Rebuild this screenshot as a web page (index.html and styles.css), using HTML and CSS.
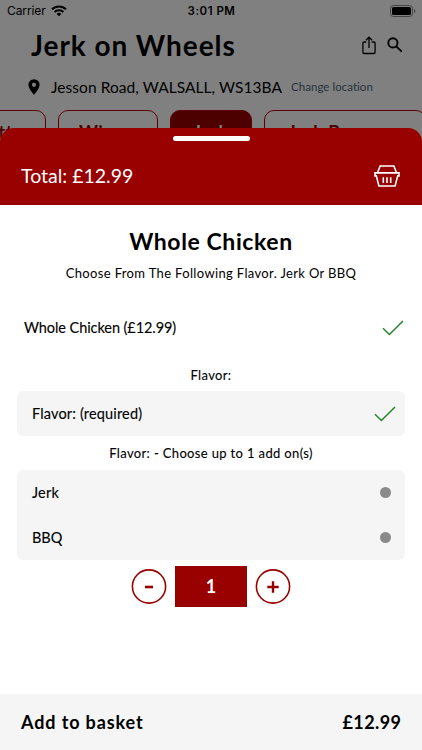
FILE: index.html
```
<!DOCTYPE html>
<html lang="en">
<head>
<meta charset="utf-8">
<title>Jerk on Wheels</title>
<link rel="stylesheet" href="styles.css">
</head>
<body>
<div class="screen">
  <div class="backdrop">
    <div class="status">
      <div class="carrier"><span class="carrier-name">Carrier</span>
        <svg width="16" height="12" viewBox="0 0 16 12" fill="none" stroke="#000" stroke-width="2.1"><path d="M1 4.3a10 10 0 0 1 14 0M3.6 7a6.3 6.3 0 0 1 8.8 0"/><path d="M8 11.3 5.6 8.9a3.5 3.5 0 0 1 4.8 0z" fill="#000" stroke="none"/></svg>
      </div>
      <span class="time">3:01 PM</span>
      <svg class="battery" width="26" height="12" viewBox="0 0 26 12"><rect x=".5" y=".5" width="22" height="11" rx="3" fill="none" stroke="#444"/><rect x="2" y="2" width="19" height="8" rx="1.6"/><path d="M24 4v4c1-.4 1.300-1 1.300-2s-.3-1.600-1.300-2z" fill="#444"/></svg>
    </div>
    <div class="title-row">
      <h1 class="shop">Jerk on Wheels</h1>
      <svg class="share" width="14" height="19" viewBox="0 0 14 19" fill="none" stroke="#000" stroke-width="1.300"><path d="M4.300 6H2.200Q.9 6 .9 7.300v8.900q0 1.300 1.300 1.300h9.600q1.300 0 1.300-1.300V7.300Q13.100 6 11.800 6H9.700M7 12V1.300M3.900 4.300 7 1.200l3.100 3.100"/></svg>
      <svg class="search" width="16" height="16" viewBox="0 0 16 16" fill="none" stroke="#000" stroke-width="1.900"><circle cx="5.900" cy="5.900" r="4.600"/><path d="m9.300 9.300 5.400 5.400"/></svg>
    </div>
    <div class="location">
      <svg width="12" height="16" viewBox="0 0 12 16"><path fill-rule="evenodd" d="M6 .2A5.600 5.600 0 0 0 .4 5.800C.4 9.800 6 15.700 6 15.700s5.600-5.900 5.600-9.900A5.600 5.600 0 0 0 6 .2zm0 3.500a2.100 2.100 0 1 1 0 4.200 2.100 2.100 0 0 1 0-4.200z"/></svg>
      <span class="address">Jesson Road, WALSALL, WS13BA</span>
      <span class="change">Change location</span>
    </div>
    <div class="tabs">
      <span class="tab tab-a">Platt</span><span class="tab tab-b">Wings</span><span class="tab tab-c">Jerk</span><span class="tab tab-d">Jerk Boxes</span>
    </div>
  </div>
  <div class="sheet">
    <div class="sheet-head">
      <div class="handle"></div>
      <div class="total-row">
        <span class="total">Total: £12.99</span>
        <svg width="26" height="22" viewBox="0 0 26 22" fill="none" stroke="#fff" stroke-width="1.600"><path d="M3.700 7.200 6.100 1h13.800l2.400 6.200M1 7.900h24v3h-1.300L21.100 21H4.900L2.300 10.900H1zM9.300 12.300v5.800M13 12.300v5.800M16.700 12.300v5.800"/></svg>
      </div>
    </div>
    <div class="content">
      <h2 class="dish">Whole Chicken</h2>
      <p class="desc"><span>Choose From The Following Flavor. Jerk Or BBQ</span></p>
      <div class="row base"><span class="t-base">Whole Chicken (£12.99)</span>
        <svg width="22" height="16" viewBox="0 0 22 16" fill="none" stroke="#23862b" stroke-width="1.500"><path d="m1 8.300 6.400 6.200L21 1"/></svg></div>
      <p class="label label-flavor"><span>Flavor:</span></p>
      <div class="card"><div class="row"><span class="t-req">Flavor: (required)</span>
        <svg width="22" height="16" viewBox="0 0 22 16" fill="none" stroke="#23862b" stroke-width="1.500"><path d="m1 8.300 6.400 6.200L21 1"/></svg></div></div>
      <p class="label label-addon"><span>Flavor: - Choose up to 1 add on(s)</span></p>
      <div class="card">
        <div class="row"><span class="t-jerk">Jerk</span><i class="dot"></i></div>
        <div class="row"><span class="t-bbq">BBQ</span><i class="dot"></i></div>
      </div>
      <div class="stepper">
        <svg width="36" height="36" viewBox="0 0 36 36" fill="none" stroke="#900"><circle cx="18" cy="17.500" r="16.600" stroke-width="1.600"/><path d="M14 18h8" stroke-width="2.600"/></svg>
        <span class="qty">1</span>
        <svg width="36" height="36" viewBox="0 0 36 36" fill="none" stroke="#900"><circle cx="18" cy="17.500" r="16.600" stroke-width="1.600"/><path d="M12.300 18h11.400M18 12.300v11.400" stroke-width="2.400"/></svg>
      </div>
    </div>
    <div class="footer"><span class="add">Add to basket</span><span class="price">£12.99</span></div>
  </div>
</div>
</body>
</html>
```
FILE: styles.css
```
* { box-sizing: border-box; }
body { margin: 0; font-family: Lato, "Liberation Sans", sans-serif; color: #000; }
h1, h2, p { margin: 0; }
svg { flex: none; display: block; }
span { white-space: nowrap; }
.screen { width: 422px; height: 750px; overflow: hidden; display: flex; flex-direction: column; background: #fff; }
.backdrop { background: #808080; height: 142px; flex: none; overflow: hidden; }
.status { height: 21px; display: grid; grid-template-columns: 1fr auto 1fr; align-items: center; padding: 0 6px 0 7px; font-family: Inter, sans-serif; font-size: 12px; }
.carrier { display: flex; align-items: center; gap: 5px; }
.carrier-name { letter-spacing: -.1px; }
.time { font-weight: 600; font-size: 11.500px; letter-spacing: .5px; }
.battery { justify-self: end; }
.title-row { height: 48px; display: flex; align-items: center; padding: 0 19px 0 31px; }
.shop { font-size: 28px; line-height: 48px; font-weight: 700; letter-spacing: .95px; flex: 1; white-space: nowrap; }
.share { margin-right: 11px; }
.location { height: 35px; display: flex; align-items: center; padding-left: 28px; }
.address { font-size: 15.500px; margin-left: 11px; letter-spacing: .06px; }
.change { font-size: 11.500px; margin-left: 9px; letter-spacing: .03px; color: #28323e; }
.tabs { display: flex; gap: 12px; margin: 6px 0 0 -54px; width: 500px; }
.tab { flex: none; height: 42px; border: 1px solid #5c0008; border-radius: 10px; color: #4c0000; font-weight: 700; font-size: 18px; letter-spacing: .5px; line-height: 42px; text-align: center; }
.tab-a { width: 100px; text-align: right; padding-right: 32px; }
.tab-b { width: 100px; text-align: left; padding-left: 20px; }
.tab-c { width: 82px; background: #4c0000; color: #808080; }
.tab-d { width: 162px; text-align: left; padding-left: 23px; }
.sheet { margin-top: -14px; position: relative; flex: 1; display: flex; flex-direction: column; }
.sheet-head { height: 77px; background: #900; border-radius: 14px 14px 0 0; padding-top: 8px; }
.sheet-head + .content { background: #fff; }
.handle { width: 77px; height: 5px; border-radius: 3px; background: #fff; margin: 0 auto; }
.total-row { display: flex; justify-content: space-between; align-items: center; height: 44px; margin-top: 13px; padding: 0 22px 0 21px; }
.total { color: #fff; font-size: 19.500px; margin-top: -2px; }
.content { flex: 1; padding: 18px 17px 0; }
.dish { font-size: 23px; line-height: 37px; text-align: center; font-weight: 700; letter-spacing: .6px; }
.desc { font-size: 13px; line-height: 24px; text-align: center; letter-spacing: .35px; margin-top: 1px; }
.row { height: 45px; display: flex; justify-content: space-between; align-items: center; padding: 0 9.500px 0 15px; font-size: 14.500px; -webkit-text-stroke: .12px #000; }
.base { padding: 0 1px 0 7px; margin-top: 20px; }
.t-base { letter-spacing: -.08px; }
.t-req { letter-spacing: .16px; }
.t-jerk { letter-spacing: .2px; }
.label { font-size: 13px; text-align: center; letter-spacing: .35px; -webkit-text-stroke: .1px #000; }
.label-flavor { line-height: 24px; margin: 13px 0 4px; }
.label-addon { line-height: 34px; }
.card { background: #f5f5f5; border-radius: 6px; }
.dot { width: 11px; height: 11px; border-radius: 50%; background: #8a8a8a; margin-right: 5px; }
.stepper { display: flex; align-items: center; justify-content: center; gap: 8px; margin-top: 6px; }
.qty { width: 72px; height: 41px; background: #900; color: #fff; text-align: center; font-size: 18px; line-height: 41px; font-weight: 700; }
.footer { height: 56px; background: #f5f5f5; display: flex; justify-content: space-between; align-items: center; padding: 0 21px; font-weight: 700; font-size: 18px; }
.add { letter-spacing: .88px; }
.price { letter-spacing: .4px; margin-right: -.4px; }
.add, .price { margin-top: -1px; }
```
